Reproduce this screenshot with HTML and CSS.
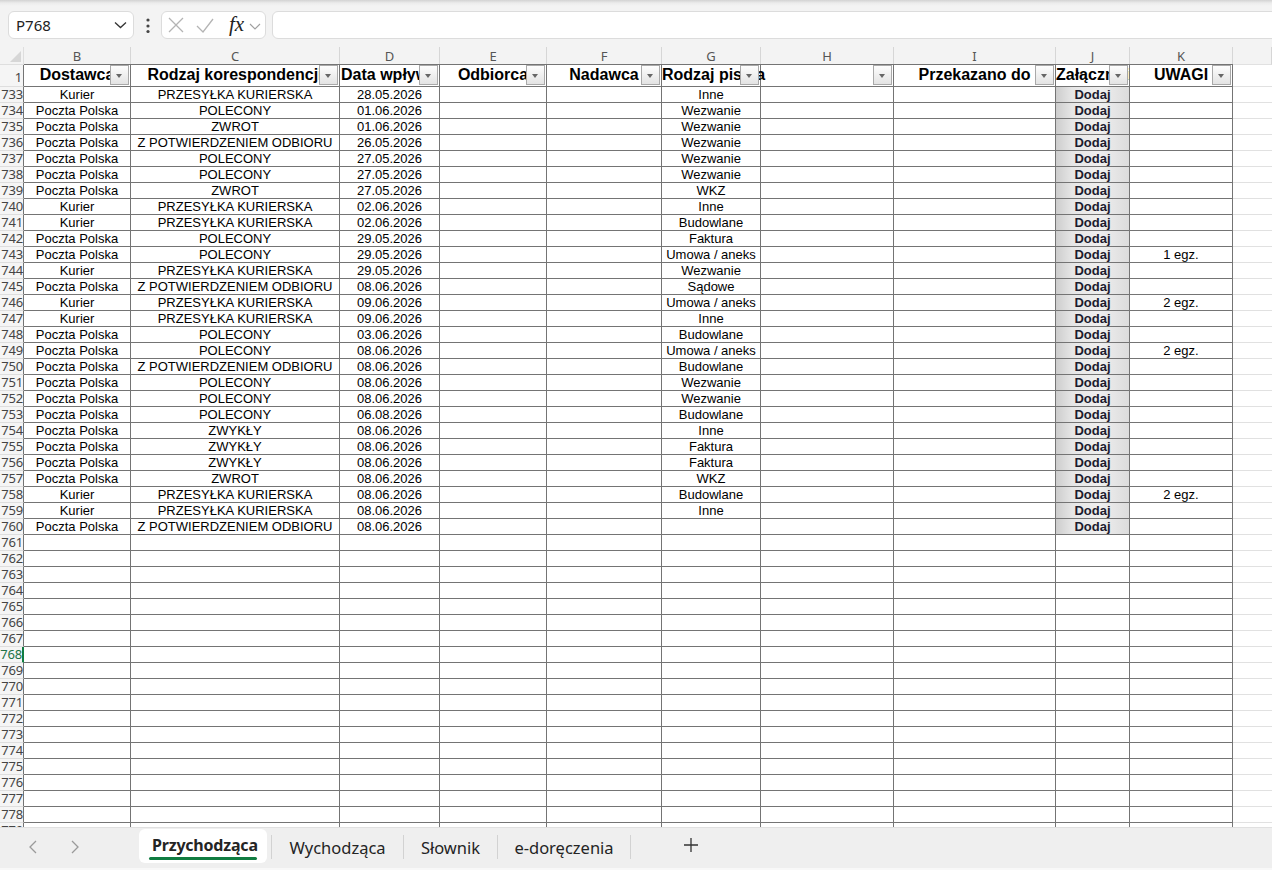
FILE: index.html
```html
<!DOCTYPE html>
<html lang="pl">
<head>
    <meta charset="UTF-8">
    <meta name="viewport" content="width=device-width, initial-scale=1.0">
    <title>Przychodząca</title>
    <link rel="stylesheet" href="styles.css">
</head>
<body>
    <div class="app">
        <div class="topbar">
            <div class="namebox">
                <span>P768</span>
                <svg class="namebox-chev" width="13" height="8" viewBox="0 0 13 8"><path d="M1 1.5l5.5 5 5.5-5" fill="none" stroke="#333" stroke-width="1.3"/></svg>
            </div>
            <svg class="more" width="6" height="16" viewBox="0 0 6 16" fill="#444"><circle cx="3" cy="2" r="1.6"/><circle cx="3" cy="8" r="1.6"/><circle cx="3" cy="13.5" r="1.6"/></svg>
            <div class="fxbox">
                <svg class="fx-cancel" width="16" height="16" viewBox="0 0 16 16"><path d="M1 1l14 14M15 1L1 15" stroke="#b4b4b4" stroke-width="1.3"/></svg>
                <svg class="fx-ok" width="18" height="15" viewBox="0 0 18 15"><path d="M1 8l6 6L17 1" fill="none" stroke="#b4b4b4" stroke-width="1.3"/></svg>
                <span class="fx">fx</span>
                <svg class="fx-chev" width="12" height="7" viewBox="0 0 12 7"><path d="M1 1l5 5 5-5" fill="none" stroke="#a0a0a0" stroke-width="1.1"/></svg>
            </div>
            <div class="formula"></div>
        </div>

        <div class="sheet" id="sheet"></div>

        <div class="tabbar">
            <div class="tab-nav">
                <svg width="8" height="14" viewBox="0 0 8 14"><path d="M7 1L1 7l6 6" fill="none" stroke="#9a9a9a" stroke-width="1.3"/></svg>
                <svg width="8" height="14" viewBox="0 0 8 14"><path d="M1 1l6 6-6 6" fill="none" stroke="#9a9a9a" stroke-width="1.3"/></svg>
            </div>
            <div class="tab tab-active">
                <span class="tab-label">Przychodząca</span>
                <div class="tab-underline"></div>
            </div>
            <div class="tab-gap"></div>
            <div class="tab-sep"></div>
            <div class="tab tab-w1">Wychodząca</div>
            <div class="tab-sep"></div>
            <div class="tab tab-w2">Słownik</div>
            <div class="tab-sep"></div>
            <div class="tab tab-w3">e-doręczenia</div>
            <div class="tab-sep"></div>
            <div class="tab tab-add">
                <svg width="14" height="14" viewBox="0 0 14 14"><path d="M7 0v14M0 7h14" stroke="#333" stroke-width="1.3"/></svg>
            </div>
        </div>
        <div class="bottomline"></div>
    </div>

    <script>
        const letters = ['B', 'C', 'D', 'E', 'F', 'G', 'H', 'I', 'J', 'K', ''];
        const heads = ['Dostawca', 'Rodzaj korespondencji', 'Data wpływu', 'Odbiorca', 'Nadawca',
                       'Rodzaj pisma', '', 'Przekazano do', 'Załączniki', 'UWAGI'];

        // dostawca, rodzaj, data, rodzaj pisma, uwagi
        const rows = [
            ['Kurier', 'PRZESYŁKA KURIERSKA', '28.05.2026', 'Inne', ''],
            ['Poczta Polska', 'POLECONY', '01.06.2026', 'Wezwanie', ''],
            ['Poczta Polska', 'ZWROT', '01.06.2026', 'Wezwanie', ''],
            ['Poczta Polska', 'Z POTWIERDZENIEM ODBIORU', '26.05.2026', 'Wezwanie', ''],
            ['Poczta Polska', 'POLECONY', '27.05.2026', 'Wezwanie', ''],
            ['Poczta Polska', 'POLECONY', '27.05.2026', 'Wezwanie', ''],
            ['Poczta Polska', 'ZWROT', '27.05.2026', 'WKZ', ''],
            ['Kurier', 'PRZESYŁKA KURIERSKA', '02.06.2026', 'Inne', ''],
            ['Kurier', 'PRZESYŁKA KURIERSKA', '02.06.2026', 'Budowlane', ''],
            ['Poczta Polska', 'POLECONY', '29.05.2026', 'Faktura', ''],
            ['Poczta Polska', 'POLECONY', '29.05.2026', 'Umowa / aneks', '1 egz.'],
            ['Kurier', 'PRZESYŁKA KURIERSKA', '29.05.2026', 'Wezwanie', ''],
            ['Poczta Polska', 'Z POTWIERDZENIEM ODBIORU', '08.06.2026', 'Sądowe', ''],
            ['Kurier', 'PRZESYŁKA KURIERSKA', '09.06.2026', 'Umowa / aneks', '2 egz.'],
            ['Kurier', 'PRZESYŁKA KURIERSKA', '09.06.2026', 'Inne', ''],
            ['Poczta Polska', 'POLECONY', '03.06.2026', 'Budowlane', ''],
            ['Poczta Polska', 'POLECONY', '08.06.2026', 'Umowa / aneks', '2 egz.'],
            ['Poczta Polska', 'Z POTWIERDZENIEM ODBIORU', '08.06.2026', 'Budowlane', ''],
            ['Poczta Polska', 'POLECONY', '08.06.2026', 'Wezwanie', ''],
            ['Poczta Polska', 'POLECONY', '08.06.2026', 'Wezwanie', ''],
            ['Poczta Polska', 'POLECONY', '06.08.2026', 'Budowlane', ''],
            ['Poczta Polska', 'ZWYKŁY', '08.06.2026', 'Inne', ''],
            ['Poczta Polska', 'ZWYKŁY', '08.06.2026', 'Faktura', ''],
            ['Poczta Polska', 'ZWYKŁY', '08.06.2026', 'Faktura', ''],
            ['Poczta Polska', 'ZWROT', '08.06.2026', 'WKZ', ''],
            ['Kurier', 'PRZESYŁKA KURIERSKA', '08.06.2026', 'Budowlane', '2 egz.'],
            ['Kurier', 'PRZESYŁKA KURIERSKA', '08.06.2026', 'Inne', ''],
            ['Poczta Polska', 'Z POTWIERDZENIEM ODBIORU', '08.06.2026', '', '']
        ];

        const sheet = document.getElementById('sheet');

        function el(cls, text) {
            const d = document.createElement('div');
            d.className = cls;
            if (text) d.textContent = text;
            return d;
        }

        function addRow(cls) {
            const r = el('row ' + cls);
            sheet.appendChild(r);
            return r;
        }

        // column letters
        let r = addRow('letters');
        r.appendChild(el('corner'));
        letters.forEach((l, i) => r.appendChild(el(i === 10 ? 'letter last' : 'letter', l)));

        // header row with filter buttons
        r = addRow('hdr');
        r.appendChild(el('rowhead', '1'));
        heads.forEach((h, i) => {
            const c = el(i === 5 ? 'cell head spill' : 'cell head');
            const label = document.createElement('span');
            label.textContent = h;
            c.appendChild(label);
            c.appendChild(el('filter'));
            r.appendChild(c);
        });
        r.appendChild(el('cell last'));

        // data rows
        let num = 733;
        rows.forEach(d => {
            r = addRow('data');
            r.appendChild(el('rowhead', String(num++)));
            const vals = [d[0], d[1], d[2], '', '', d[3], '', ''];
            vals.forEach(v => r.appendChild(el('cell', v)));
            r.appendChild(el('cell dodaj', 'Dodaj'));
            r.appendChild(el('cell', d[4]));
            r.appendChild(el('cell last'));
        });

        // empty rows, the last one is cut by the tab bar
        for (; num <= 779; num++) {
            r = addRow('data');
            r.appendChild(el(num === 768 ? 'rowhead active' : 'rowhead', String(num)));
            for (let i = 0; i < 10; i++) r.appendChild(el('cell'));
            r.appendChild(el('cell last'));
        }
    </script>
</body>
</html>
```

FILE: styles.css
```css
* {
    box-sizing: border-box;
}
body {
    margin: 0;
    width: 1272px;
    height: 870px;
    overflow: hidden;
    background: #f3f3f3;
    font-family: "Noto Sans", sans-serif;
}
.app {
    display: flex;
    flex-direction: column;
    height: 870px;
}

/* formula bar */
.topbar {
    height: 47px;
    flex: none;
    display: flex;
    align-items: flex-start;
    padding: 11px 0 0 8px;
    background: linear-gradient(#d2d2d2 0, #ececec 3px, #f3f3f3 6px);
    overflow: hidden;
}
.namebox {
    width: 126px;
    height: 28px;
    background: white;
    border: 1px solid #dcdcdc;
    border-radius: 6px;
    display: flex;
    align-items: center;
    padding: 0 6px 0 7px;
    font-size: 15px;
    color: #222;
}
.namebox-chev {
    margin-left: auto;
}
.more {
    margin: 7px 0 0 11px;
}
.fxbox {
    width: 105px;
    height: 28px;
    margin-left: 10px;
    background: white;
    border: 1px solid #dcdcdc;
    border-radius: 6px;
    display: flex;
    align-items: center;
    padding-left: 6px;
}
.fx-ok {
    margin-left: 12px;
}
.fx {
    margin-left: 15px;
    font: italic 21px/1 "Liberation Serif", serif;
    color: #222;
    position: relative;
    top: -1px;
}
.fx-chev {
    margin-left: 5px;
    margin-top: 2px;
}
.formula {
    flex: 1;
    height: 28px;
    margin-left: 6px;
    margin-right: -8px;
    background: white;
    border: 1px solid #dcdcdc;
    border-radius: 6px;
}

/* grid */
.sheet {
    height: 780px;
    flex: none;
    overflow: hidden;
    background: white;
}
.row {
    display: grid;
    grid-template-columns: 24px 107px 209px 100px 107px 115px 99px 133px 162px 74px 103px 1fr;
    height: 16px;
}
.row.letters {
    height: 17px;
    background: #f3f3f3;
}
.row.hdr {
    height: 23px;
}
.corner {
    border-bottom: 1px solid #dedede;
    border-right: 1px solid #dedede;
    position: relative;
}
.corner::after {
    content: "";
    position: absolute;
    right: 2px;
    bottom: 2px;
    border-left: 11px solid transparent;
    border-bottom: 11px solid #d6d6d6;
}
.letter {
    border-right: 1px solid #d6d6d6;
    border-bottom: 1px solid #747474;
    text-align: center;
    font-size: 13px;
    line-height: 15px;
    padding-top: 2px;
    color: #555;
}
.letter.last {
    border-bottom-color: #e1e1e1;
}
.rowhead {
    background: #f5f5f5;
    border-right: 1px solid #747474;
    border-bottom: 1px solid #dedede;
    text-align: right;
    font-size: 13px;
    line-height: 15px;
    letter-spacing: -0.2px;
    color: #444;
    white-space: nowrap;
}
.hdr .rowhead {
    padding: 6px 1px 0 0;
}
.rowhead.active {
    color: #217346;
    border-right: 2px solid #107c41;
}
.cell {
    border-right: 1px solid #747474;
    border-bottom: 1px solid #747474;
    font: 13px/15px "Liberation Sans", Arial, sans-serif;
    color: #000;
    text-align: center;
    white-space: nowrap;
    overflow: hidden;
}
.cell.last {
    border-right: none;
    border-bottom-color: #e1e1e1;
}
.cell.head {
    position: relative;
    font-weight: bold;
    font-size: 16px;
    line-height: 22px;
}
.cell.head.spill {
    overflow: visible;
    text-align: left;
    z-index: 1;
}
.filter {
    position: absolute;
    right: 1px;
    top: 1px;
    width: 19px;
    height: 20px;
    border: 1px solid #a9a9a9;
    background: linear-gradient(#fdfdfd, #e3e3e3);
}
.filter::after {
    content: "";
    position: absolute;
    left: 5px;
    top: 8px;
    border-top: 4px solid #666;
    border-left: 3.5px solid transparent;
    border-right: 3.5px solid transparent;
}
.cell.dodaj {
    font-weight: bold;
    color: #1c1c2e;
    background: linear-gradient(to right, #cdcdcd 0%, #e6e6e6 22%, #efefef 60%, #dcdcdc 100%);
}

/* sheet tabs */
.tabbar {
    height: 41px;
    flex: none;
    display: flex;
    align-items: flex-start;
    background: #efefef;
    border-top: 1px solid #e0e0e0;
}
.tab-nav {
    width: 139px;
    display: flex;
    padding: 12px 0 0 29px;
    gap: 34px;
}
.tab {
    height: 34px;
    line-height: 34px;
    padding-top: 3px;
    text-align: center;
    font-size: 16.5px;
    color: #242424;
}
.tab-active {
    width: 128px;
    margin-top: 1px;
    padding: 5px 0 0 13px;
    text-align: left;
    background: white;
    border-radius: 6px;
    line-height: 22px;
}
.tab-label {
    font-size: 16px;
    font-weight: bold;
    color: #242424;
    letter-spacing: -0.2px;
}
.tab-underline {
    width: 108px;
    height: 3px;
    margin: 1px 0 0 -3px;
    border-radius: 2px;
    background: #107c41;
}
.tab-gap {
    width: 4px;
}
.tab-sep {
    width: 1px;
    height: 24px;
    margin-top: 7px;
    background: #d2d2d2;
}
.tab-w1 {
    width: 131px;
}
.tab-w2 {
    width: 93px;
}
.tab-w3 {
    width: 132px;
}
.tab-add {
    width: 120px;
    padding-top: 10px;
    line-height: 14px;
}
.bottomline {
    flex: 1;
    background: #f8f8f8;
}
```
